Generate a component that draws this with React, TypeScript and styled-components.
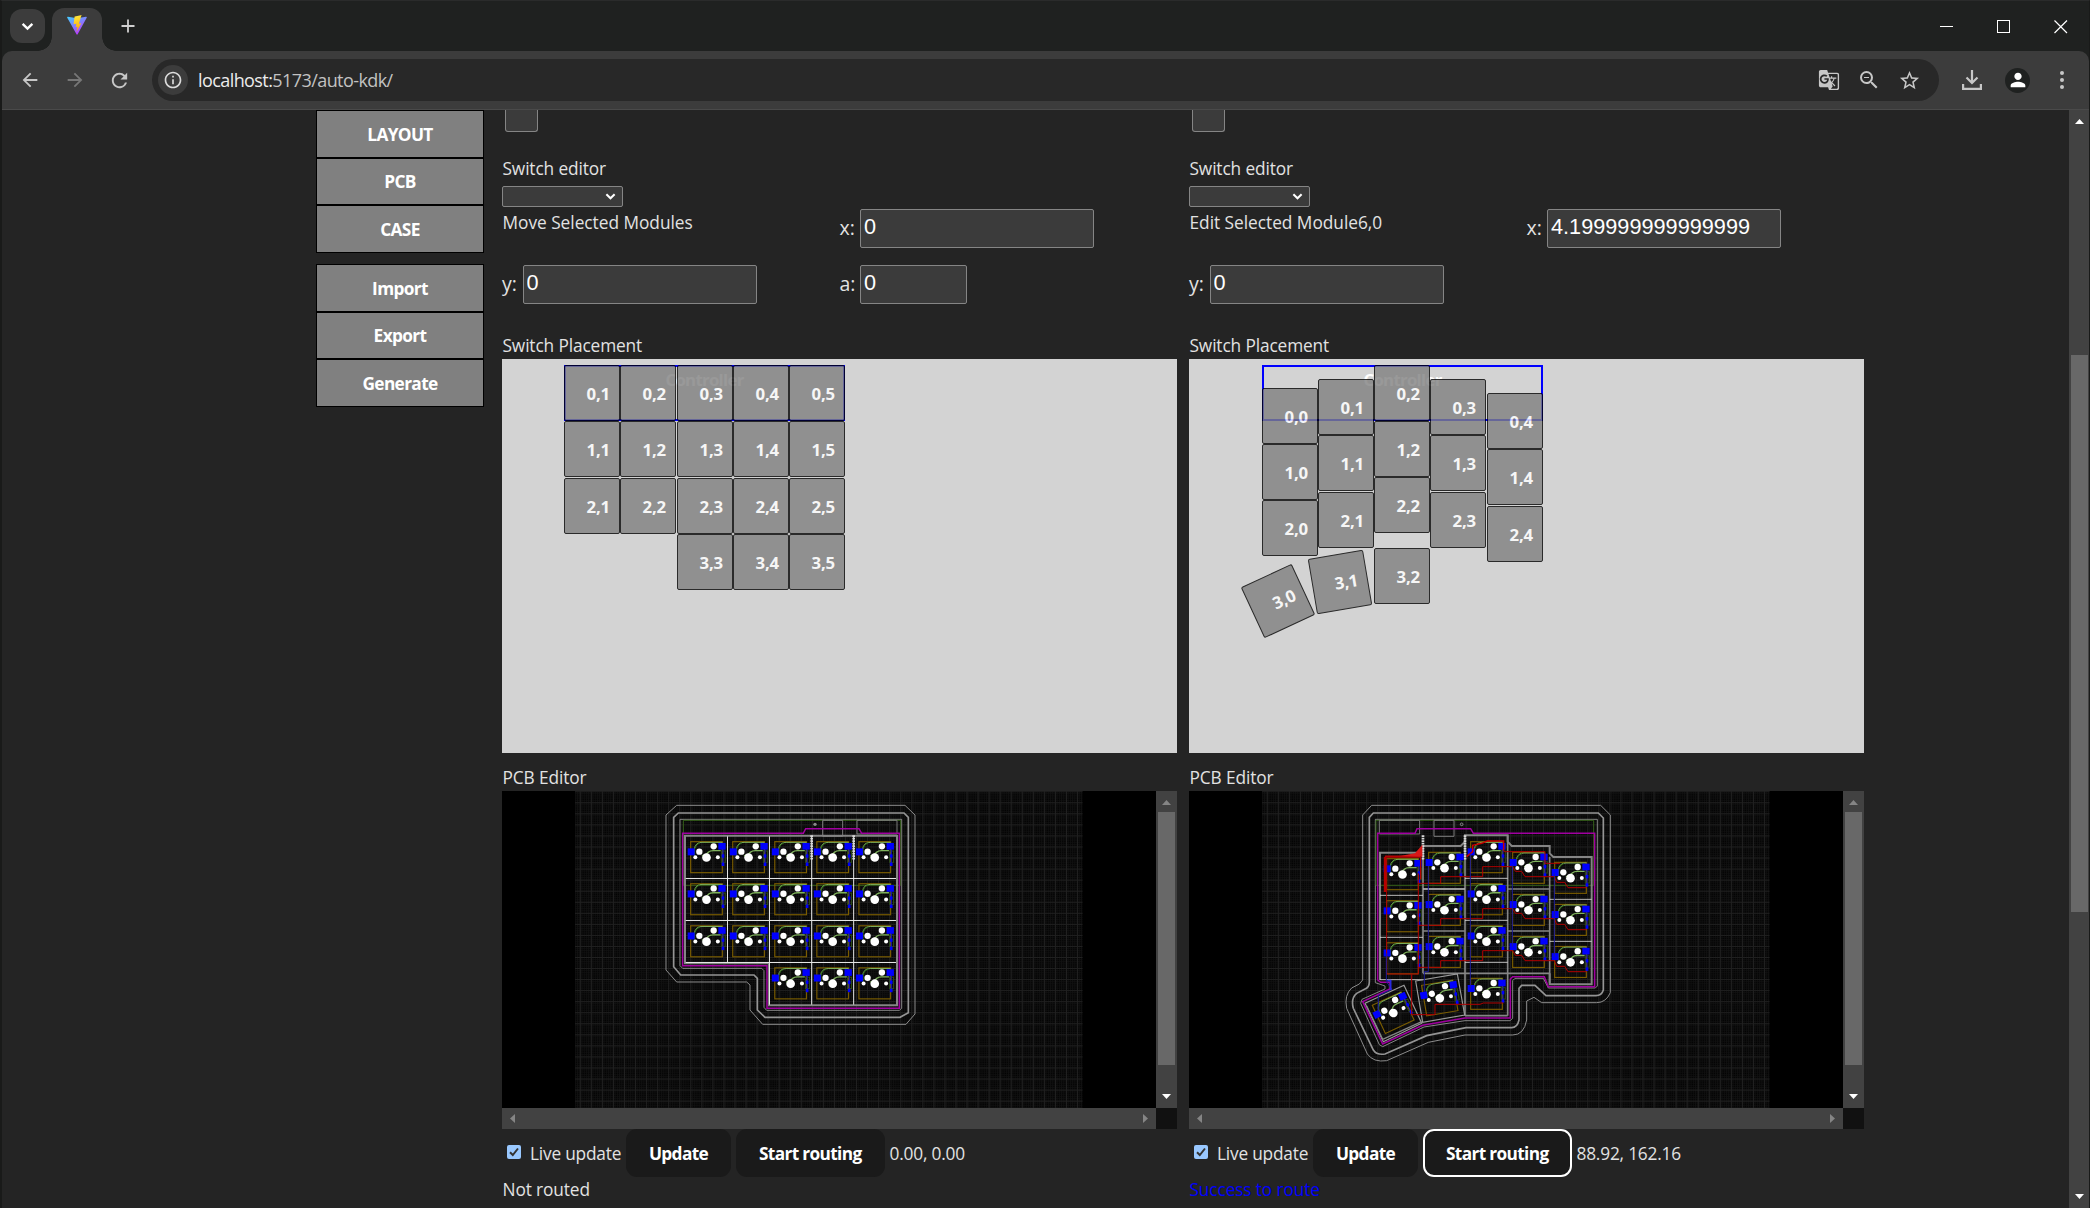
import React from "react";
import styled, { createGlobalStyle } from "styled-components";
import {
  MdArrowBack,
  MdArrowForward,
  MdRefresh,
  MdOutlineInfo,
  MdGTranslate,
  MdZoomOut,
  MdStarBorder,
  MdPerson,
} from "react-icons/md";

const ui = `"Open Sans", "Noto Sans", sans-serif`;

const GlobalStyle = createGlobalStyle`
  * { box-sizing: border-box; }
  html, body { margin: 0; padding: 0; background: #242424; overflow: hidden; }
  button, input, select { margin: 0; }
`;

/* ---------- browser window ---------- */

const Window = styled.div`
  width: 2090px;
  height: 1208px;
  display: flex;
  flex-direction: column;
  overflow: hidden;
  background: #1f2120;
  border-left: 2px solid #191a19;
  border-right: 1px solid #191a19;
  border-top: 1px solid #2a2b2b;
  font-family: ${ui};
  color: #e2e2e2;
`;

const TabStrip = styled.div`
  height: 50px;
  flex: none;
  display: flex;
  align-items: flex-start;
  padding: 7px 0 0 8px;
`;

const TabSearch = styled.div`
  width: 35px;
  height: 34px;
  margin-top: 1px;
  border-radius: 12px;
  background: #3c3c3c;
  display: flex;
  align-items: center;
  justify-content: center;
`;

const Tab = styled.div`
  position: relative;
  width: 50px;
  height: 43px;
  margin-left: 7px;
  border-radius: 12px 12px 0 0;
  background: #3c3c3c;
  display: flex;
  justify-content: center;
  padding-top: 7px;

  &::before,
  &::after {
    content: "";
    position: absolute;
    bottom: 0;
    width: 14px;
    height: 14px;
  }
  &::before {
    left: -14px;
    background: radial-gradient(circle at 0 0, transparent 13.5px, #3c3c3c 14px);
  }
  &::after {
    right: -14px;
    background: radial-gradient(circle at 100% 0, transparent 13.5px, #3c3c3c 14px);
  }
`;

const NewTab = styled.div`
  width: 14px;
  height: 14px;
  margin: 11px 0 0 18.5px;
  display: flex;
`;

const WindowButtons = styled.div`
  margin-left: auto;
  padding: 12px 21px 0 0;
  display: flex;
  gap: 43px;
`;

const Toolbar = styled.div`
  height: 59px;
  flex: none;
  display: flex;
  align-items: center;
  background: #3c3c3c;
  border-bottom: 1px solid #4a4a4a;
  border-radius: 10px 10px 0 0;
  padding-left: 5px;
  color: #c7c7c7;
`;

const NavButton = styled.div<{ $dim?: boolean }>`
  width: 45px;
  display: flex;
  justify-content: center;
  color: ${(p) => (p.$dim ? "#777" : "#c7c7c7")};
`;

const Omnibox = styled.div`
  width: 1787px;
  height: 42px;
  margin-left: 10px;
  border-radius: 21px;
  background: #282828;
  display: flex;
  align-items: center;
  padding: 0 18px 0 6px;
`;

const SiteInfo = styled.div`
  width: 30px;
  height: 30px;
  border-radius: 50%;
  background: #3c3c3c;
  color: #dcdcdc;
  display: flex;
  align-items: center;
  justify-content: center;
`;

const Url = styled.div`
  margin-left: 10px;
  font-size: 18px;
  line-height: 24px;
  letter-spacing: -0.58px;
  color: #c2c2c2;
  white-space: nowrap;
`;

const Host = styled.span`
  color: #ececec;
`;

const OmniActions = styled.div`
  margin-left: auto;
  display: flex;
  align-items: center;
  gap: 17px;
`;

const ToolbarEnd = styled.div`
  display: flex;
  align-items: center;
  margin-left: 23px;
`;

const Avatar = styled.div`
  width: 25px;
  height: 25px;
  margin: 0 30px 0 23px;
  border-radius: 50%;
  background: #1f2120;
  color: #fff;
  display: flex;
  align-items: center;
  justify-content: center;
`;

/* ---------- page ---------- */

const Viewport = styled.div`
  height: 1098px;
  flex: none;
  display: flex;
  background: #242424;
`;

const Page = styled.div`
  flex: 1;
  display: flex;
  align-items: flex-start;
  padding-left: 314px;
  overflow: hidden;
`;

const Menu = styled.nav`
  width: 168px;
  flex: none;
  display: flex;
  flex-direction: column;
  gap: 11px;
`;

const MenuGroup = styled.div`
  display: grid;
  grid-template-rows: 46px 45px 46px;
  row-gap: 2px;
  height: 143px;
  border: 1px solid #000;
  background: #000;
`;

const MenuButton = styled.div`
  display: flex;
  align-items: center;
  justify-content: center;
  background: #808080;
  color: #fff;
  font-size: 17.3px;
  font-weight: 700;
  letter-spacing: -0.65px;
`;

const Columns = styled.div`
  display: flex;
  gap: 12px;
  margin-left: 18px;
`;

const Column = styled.section`
  width: 675px;
  display: flex;
  flex-direction: column;
`;

const StubRow = styled.div`
  height: 46px;
  padding-left: 3px;
`;

const Stub = styled.div`
  width: 33px;
  height: 22px;
  background: #3b3b3b;
  border: 1px solid #858585;
  border-top: 0;
  border-radius: 0 0 3px 3px;
`;

const Label = styled.div<{ $gap: number }>`
  height: 24px;
  line-height: 26px;
  margin-bottom: ${(p) => p.$gap}px;
  font-size: 17.3px;
  letter-spacing: -0.12px;
  padding-left: 0.5px;
  white-space: nowrap;
`;

const Dropdown = styled.div`
  width: 121px;
  height: 21px;
  border: 1px solid #858585;
  border-radius: 2px;
  background: #3b3b3b;
  display: flex;
  align-items: center;
  justify-content: flex-end;
  padding-right: 6px;
`;

const Fields = styled.div`
  display: grid;
  grid-template-columns: 337.5px 337.5px;
  grid-template-rows: 56px 70px;
  align-items: start;
  padding-top: 2px;
  margin-bottom: -2px;
`;

const FieldCaption = styled.div`
  font-size: 17.3px;
  line-height: 24px;
  letter-spacing: -0.02px;
  white-space: nowrap;
  padding: 2px 0 0 0.5px;
`;

const Field = styled.label`
  display: flex;
  align-items: center;
  font-size: 19.5px;
  line-height: 38px;
`;

const FieldName = styled.span`
  width: 20.5px;
`;

const NumberInput = styled.input<{ $width: number }>`
  width: ${(p) => p.$width}px;
  height: 38.5px;
  padding: 0 3px 2px;
  border: 1px solid #858585;
  border-radius: 2px;
  background: #3b3b3b;
  color: #fff;
  font-family: "Liberation Sans", Arial, sans-serif;
  font-size: 21.7px;
  outline: none;
`;

/* ---------- switch placement canvas ---------- */

const Placement = styled.div`
  position: relative;
  height: 394px;
  background: #d3d3d3;
  margin-bottom: 12px;
  overflow: hidden;
  font-size: 16.8px;
  font-weight: 700;
  color: #fff;
`;

const Controller = styled.div<{ $x: number }>`
  position: absolute;
  left: ${(p) => p.$x}px;
  top: 6px;
  width: 281px;
  height: 56px;
  border: 2px solid #0000ff;
  text-align: center;
  line-height: 26px;
  letter-spacing: -0.7px;
`;

const Key = styled.div<{ $x: number; $y: number; $a: number }>`
  position: absolute;
  left: ${(p) => p.$x}px;
  top: ${(p) => p.$y}px;
  width: 56px;
  height: 56px;
  border: 1px solid #000;
  border-radius: 2px;
  background: #808080;
  opacity: 0.8;
  transform: ${(p) => (p.$a ? `rotate(${p.$a}deg)` : "none")};
  padding-left: 21.5px;
  line-height: 55px;
  letter-spacing: -0.2px;
  white-space: nowrap;
`;

/* ---------- pcb editor ---------- */

const PcbFrame = styled.div`
  display: grid;
  grid-template-columns: 654px 21px;
  grid-template-rows: 317px 21px;
  background: #111;
`;

const PcbCanvas = styled.svg`
  display: block;
  width: 654px;
  height: 317px;
  background: #000;
`;

const VBar = styled.div<{ $w: number }>`
  width: ${(p) => p.$w}px;
  flex: none;
  background: #424242;
  display: flex;
  flex-direction: column;
  align-items: center;
`;

const VThumb = styled.div<{ $h: number }>`
  width: 17px;
  height: ${(p) => p.$h}px;
  background: #686868;
`;

const ArrowSlot = styled.div<{ $h: number; $end?: boolean }>`
  height: ${(p) => p.$h}px;
  margin-top: ${(p) => (p.$end ? "auto" : 0)};
  display: flex;
  align-items: center;
  justify-content: center;
  padding-top: ${(p) => (p.$end ? 0 : 2)}px;
  padding-bottom: ${(p) => (p.$end ? 2 : 0)}px;
`;

const HBar = styled.div`
  background: #424242;
  display: flex;
  align-items: center;
  justify-content: space-between;
  padding: 0 8px;
`;

const Controls = styled.div`
  height: 48px;
  display: flex;
  align-items: center;
  font-size: 17.3px;
  letter-spacing: -0.2px;
  padding-left: 5px;
  white-space: nowrap;
`;

const Check = styled.span`
  width: 14px;
  height: 14px;
  border-radius: 2px;
  background: #99c8ff;
  display: flex;
  margin-top: -2px;
`;

const LiveText = styled.span`
  width: 96px;
  margin-left: 9px;
`;

const PillButton = styled.button<{ $w: number; $focus?: boolean }>`
  width: ${(p) => p.$w}px;
  height: 48px;
  padding: 0;
  margin-right: 4.5px;
  border: 0;
  border-radius: 11px;
  background: #1a1a1a;
  color: #fff;
  font-family: ${ui};
  font-size: 17.3px;
  font-weight: 700;
  letter-spacing: -0.65px;
  outline: ${(p) => (p.$focus ? "2px solid #fff" : "none")};
  outline-offset: -2px;
`;

const Status = styled.div<{ $ok?: boolean }>`
  margin-top: 1px;
  font-size: 17.3px;
  line-height: 24px;
  letter-spacing: -0.12px;
  padding-left: 0.5px;
  color: ${(p) => (p.$ok ? "#0000ff" : "#e2e2e2")};
`;

/* ---------- drawings ---------- */

const ViteLogo = () => (
  <svg width="20" height="20" viewBox="0 0 32 32">
    <defs>
      <linearGradient id="va" x1="0" x2="0.6" y1="0" y2="1">
        <stop offset="0" stopColor="#41d1ff" />
        <stop offset="1" stopColor="#bd34fe" />
      </linearGradient>
      <linearGradient id="vb" x1="0.4" x2="0.6" y1="0" y2="1">
        <stop offset="0" stopColor="#ffea3d" />
        <stop offset="1" stopColor="#ffa000" />
      </linearGradient>
    </defs>
    <path d="M31.5 4.2 17 30.9a1 1 0 0 1-1.8 0L.4 4.2a1 1 0 0 1 1.1-1.5L16 5.2l14.4-2.5a1 1 0 0 1 1.1 1.5z" fill="url(#va)" />
    <path d="M24 0 12.5 2.2a.5.5 0 0 0-.4.4l-1.6 12.2 4.5-.7-1 5.3 2.8-.7-1.5 8.5 7.500-14-3.800.6L23 .9z" fill="url(#vb)" />
  </svg>
);

const ChevronDown = ({ w }: { w: number }) => (
  <svg width={w} height={w} viewBox="0 0 12 12">
    <path d="M1.5 3.5 6 8 10.5 3.5" fill="none" stroke="#fff" strokeWidth="2.2" />
  </svg>
);

type Dir = "up" | "down" | "left" | "right";
const arrowPoints: Record<Dir, string> = {
  up: "0,5 4.5,0 9,5",
  down: "0,0 9,0 4.5,5",
  left: "5,0 5,9 0,4.5",
  right: "0,0 5,4.5 0,9",
};
const Arrow = ({ dir, color }: { dir: Dir; color: string }) => {
  const flat = dir === "up" || dir === "down";
  return (
    <svg width={flat ? 9 : 5} height={flat ? 5 : 9}>
      <polygon points={arrowPoints[dir]} fill={color} />
    </svg>
  );
};

/* One key footprint: outline, pads, holes and diode. */
const Footprint = () => (
  <g>
    <rect x="122" y="155" width="95" height="93" fill="none" stroke="#7a5c00" strokeWidth="3.5" />
    <path d="M133 192V178Q136 157 156 157H217" fill="none" stroke="#7fb35c" strokeWidth="3" />
    <path d="M134 200V176Q138 162 150 158" fill="none" stroke="#2f6a1c" strokeWidth="3" />
    <path d="M156 198Q168 196 176 186Q180 182 190 182H212" fill="none" stroke="#7fb35c" strokeWidth="4" />
    <rect x="214" y="183" width="12" height="34" fill="none" stroke="#2c4a1a" strokeWidth="3" />
    <path d="M219 179V226" stroke="#1414c8" strokeWidth="3" />
    <rect x="113" y="175" width="21" height="21" fill="#0000ff" />
    <rect x="205" y="159" width="22" height="20" fill="#0000ff" />
    <rect x="215" y="193" width="8" height="10" fill="#0000ff" />
    <rect x="215" y="218" width="8" height="10" fill="#0000ff" />
    <circle cx="148" cy="185" r="9.5" fill="#fff" />
    <circle cx="191" cy="169" r="9.5" fill="#fff" />
    <circle cx="169.5" cy="202.5" r="13" fill="#fff" />
    <circle cx="136" cy="202" r="6" fill="#fff" />
    <circle cx="203.5" cy="202" r="6" fill="#fff" />
  </g>
);

const Grid = ({ id }: { id: string }) => (
  <>
    <defs>
      <pattern id={`${id}m`} width="2.21" height="2.21" patternUnits="userSpaceOnUse">
        <rect width="2.21" height="2.21" fill="#030303" />
        <path d="M.5 0V2.21M0 .5H2.21" stroke="#111" strokeWidth="0.8" />
      </pattern>
      <pattern id={`${id}g`} x="0.5" y="0.3" width="11.05" height="11.05" patternUnits="userSpaceOnUse">
        <path d="M.5 0V11.05M0 .5H11.05" stroke="#202020" strokeWidth="1" />
      </pattern>
    </defs>
    <rect x="73" width="507.5" height="317" fill={`url(#${id}m)`} />
    <rect x="73" width="507.5" height="317" fill={`url(#${id}g)`} />
  </>
);

const P = 126.2;

const leftCells: [number, number][] = [];
for (let r = 0; r < 4; r++) for (let c = r === 3 ? 2 : 0; c < 5; c++) leftCells.push([c * P, r * P]);

const LeftBoard = () => (
  <PcbCanvas viewBox="0 0 654 317">
    <Grid id="l" />
    <g transform="translate(148 -1) scale(0.33333)" fill="none">
      <path d="M80 46H765L795 75V672L768 703H338L300 660V585L290 576H80L48 540V75Z" stroke="#8c8c8c" strokeWidth="3" />
      <path d="M85 69H762L775 82V668L750 682H345L322 660V565L312 555H92L71 530V82Z" stroke="#949494" strokeWidth="5" />
      <path d="M90 88H755V655L748 661H350L342 652V542L335 535H98L90 527Z" stroke="#9c9c9c" strokeWidth="2.5" />
      <path d="M100 91H752V286H100Z" stroke="#35611a" strokeWidth="3" />
      <path d="M518 91H578V139H518ZM621 91H741V132H621Z" stroke="#7c7c7c" strokeWidth="3" />
      <circle cx="495" cy="103" r="5" fill="#8a8a8a" />
      <path d="M105 137H741V646H357V520H105Z" stroke="#858585" strokeWidth="6" />
      <path d="M98 130H460L467 116H627L635 130H748V655H351V527H98Z" stroke="#a000a0" strokeWidth="4.5" />
      <path
        d="M232.5 139V517M358.5 139V644M485 139V644M611 139V644M107 265.5H738M107 391.5H738M107 517.5H738"
        stroke="#e8e8e8"
        strokeWidth="3"
      />
      <path d="M485 136V210M611 136V210" stroke="#d8d8d8" strokeWidth="8" strokeDasharray="5 2.5" />
      {leftCells.map(([x, y], i) => (
        <g key={i} transform={`translate(${x} ${y})`}>
          <Footprint />
        </g>
      ))}
    </g>
  </PcbCanvas>
);

const rightCells: [number, number][] = [];
[
  [48, 51],
  [174, 32],
  [300, 0],
  [426, 32],
  [552, 62],
].forEach(([x, y]) => {
  for (let r = 0; r < 3; r++) rightCells.push([x, y + r * P]);
});
rightCells.push([300, 410]);

const RightBoard = () => (
  <PcbCanvas viewBox="0 0 654 317">
    <Grid id="r" />
    <g transform="translate(141 -1) scale(0.33333)" fill="none">
      <path
        d="M125 46H812L841 75V608Q828 638 800 638H635L612 622L590 633V690Q582 735 548 735H405L295 757L170 812Q130 818 112 792L50 655Q42 615 65 594L88 582L98 570V75Z"
        stroke="#8c8c8c"
        strokeWidth="3"
      />
      <path
        d="M130 69H805L820 84V600Q815 617 798 617H648L615 586H575L567 595V690Q562 713 545 713H408L290 737L165 792Q140 796 130 780L70 655Q62 625 80 610L105 597Q118 592 118 575V82Z"
        stroke="#949494"
        strokeWidth="5"
      />
      <path
        d="M136 88H802V588L796 594H655L640 565H555L548 572V685L540 692H405L282 711L158 770L148 764L92 640L96 628L165 597V588L136 578Z"
        stroke="#9c9c9c"
        strokeWidth="2.5"
      />
      <path d="M138 91H791V286H138Z" stroke="#35611a" strokeWidth="3" />
      <path d="M148 91H269V132H148ZM312 91H372V139H312Z" stroke="#7c7c7c" strokeWidth="3" />
      <circle cx="395" cy="103" r="4" stroke="#8a8a8a" strokeWidth="3" />
      <path
        d="M150 570V188H279V168H392L405 155V136H533V155L545 168H659V190L670 201H785V583H659V550"
        stroke="#858585"
        strokeWidth="6"
      />
      <path
        d="M279 168V550M405 136V677M533 136V677M659 200V580M279 550H659M405 677H533M279 297H405M279 423H405M533 297H659M533 423H659"
        stroke="#858585"
        strokeWidth="5"
      />
      <path
        d="M150 316H279M150 442H279M279 297H405M405 265H533M405 391H533M659 328H785M659 454H785M405 517H533M150 569H279"
        stroke="#dedede"
        strokeWidth="2.5"
      />
      <path d="M257 573L382 552L404 675L278 697ZM105 640L222 586L275 700L160 755Z" stroke="#9a9a9a" strokeWidth="3.5" />
      <path d="M110 648L158 748L275 695" stroke="#858585" strokeWidth="4" />
      <path
        d="M143 130H255L261 116H422L430 130H794V590H655L643 560H548L541 567V684H405L278 706L158 762L98 635L180 597V577H152L143 570Z"
        stroke="#a000a0"
        strokeWidth="4.5"
      />
      <path d="M279 136V210M405 136V210" stroke="#d8d8d8" strokeWidth="8" strokeDasharray="5 2.5" />

      {rightCells.map(([x, y], i) => (
        <g key={i} transform={`translate(${x} ${y})`}>
          <Footprint />
        </g>
      ))}
      <g transform="translate(329.5 625) rotate(-9.6) translate(-169.5 -202.5)">
        <Footprint />
      </g>
      <g transform="translate(190 669) rotate(-25) translate(-169.5 -202.5)">
        <Footprint />
      </g>

      <g stroke="#b00000" strokeWidth="3">
        {[0, 126, 252].map((d) => (
          <path
            key={d}
            transform={`translate(0 ${d})`}
            d="M265 280H332V260H458V230H548L556 244H575L585 260H673L680 277H704L714 293H770"
          />
        ))}
        <path d="M170 205V552H265V250M245 553V674H315V643H450L460 639H520M521 185H645V220H690" />
      </g>
      <path d="M165 200V306M165 200H270" stroke="#b80000" strokeWidth="7" />
      <path d="M272 200V268" stroke="#b80000" strokeWidth="4" />
      <path d="M210 198L255 190L277 164V200Z" fill="#d81818" />
      <path d="M410 200L428 185V166L455 160L472 153H521V182" stroke="#c80000" strokeWidth="4.5" />
      <path
        d="M295 228V545H283V605M421 190V595M547 225V470M673 250V500M169 490V575L186 598L145 616V665"
        stroke="#1c1c9c"
        strokeWidth="3"
      />
      <path d="M172 572H182V600" stroke="#2a2ae0" strokeWidth="5" />
    </g>
  </PcbCanvas>
);

/* ---------- data ---------- */

type KeyDef = { t: string; x: number; y: number; a?: number };

const PITCH = 56.25;

const leftKeys: KeyDef[] = leftCells.map(([cx, cy]) => {
  const c = Math.round(cx / P);
  const r = Math.round(cy / P);
  return { t: `${r},${c + 1}`, x: Math.round(62 + c * PITCH), y: Math.round(6 + r * PITCH) };
});

const rightKeys: KeyDef[] = [];
[29, 20.5, 6.3, 20.5, 34.5].forEach((top, c) => {
  for (let r = 0; r < 3; r++)
    rightKeys.push({ t: `${r},${c}`, x: Math.floor(73 + c * PITCH), y: Math.floor(top + r * PITCH) });
});
rightKeys.push({ t: "3,0", x: 61, y: 214, a: -25 });
rightKeys.push({ t: "3,1", x: 123.2, y: 195, a: -9.6 });
rightKeys.push({ t: "3,2", x: 185, y: 189 });

type PanelProps = {
  caption: string;
  x: string;
  withAngle?: boolean;
  controllerX: number;
  keys: KeyDef[];
  board: React.ReactNode;
  position: string;
  status: string;
  routed?: boolean;
};

const Panel = (p: PanelProps) => (
  <Column>
    <StubRow>
      <Stub />
    </StubRow>
    <Label $gap={6}>Switch editor</Label>
    <Dropdown>
      <ChevronDown w={11} />
    </Dropdown>
    <Fields>
      <FieldCaption>{p.caption}</FieldCaption>
      <Field>
        <FieldName>x:</FieldName>
        <NumberInput $width={234} defaultValue={p.x} />
      </Field>
      <Field>
        <FieldName>y:</FieldName>
        <NumberInput $width={234} defaultValue="0" />
      </Field>
      {p.withAngle && (
        <Field>
          <FieldName>a:</FieldName>
          <NumberInput $width={107} defaultValue="0" />
        </Field>
      )}
    </Fields>
    <Label $gap={2}>Switch Placement</Label>
    <Placement>
      <Controller $x={p.controllerX}>Controller</Controller>
      {p.keys.map((k) => (
        <Key key={k.t} $x={k.x} $y={k.y} $a={k.a ?? 0}>
          {k.t}
        </Key>
      ))}
    </Placement>
    <Label $gap={2}>PCB Editor</Label>
    <PcbFrame>
      {p.board}
      <VBar $w={21}>
        <ArrowSlot $h={21}>
          <Arrow dir="up" color="#858585" />
        </ArrowSlot>
        <VThumb $h={253} />
        <ArrowSlot $h={21} $end>
          <Arrow dir="down" color="#fff" />
        </ArrowSlot>
      </VBar>
      <HBar>
        <Arrow dir="left" color="#858585" />
        <Arrow dir="right" color="#858585" />
      </HBar>
    </PcbFrame>
    <Controls>
      <Check>
        <svg width="14" height="14" viewBox="0 0 14 14">
          <path d="M3 7.2 5.8 10 11 3.5" fill="none" stroke="#333" strokeWidth="2" />
        </svg>
      </Check>
      <LiveText>Live update</LiveText>
      <PillButton $w={105}>Update</PillButton>
      <PillButton $w={149.5} $focus={p.routed}>
        Start routing
      </PillButton>
      <span>{p.position}</span>
    </Controls>
    <Status $ok={p.routed}>{p.status}</Status>
  </Column>
);

const menuGroups = [
  ["LAYOUT", "PCB", "CASE"],
  ["Import", "Export", "Generate"],
];

export default function App() {
  return (
    <Window>
      <GlobalStyle />
      <TabStrip>
        <TabSearch>
          <ChevronDown w={13} />
        </TabSearch>
        <Tab>
          <ViteLogo />
        </Tab>
        <NewTab>
          <svg width="14" height="14">
            <path d="M7 .5V13.5M.5 7H13.5" stroke="#d0d0d0" strokeWidth="1.8" />
          </svg>
        </NewTab>
        <WindowButtons>
          <svg width="14" height="14">
            <path d="M0 6.5H13" stroke="#fff" />
          </svg>
          <svg width="14" height="14">
            <rect x=".5" y=".5" width="12" height="12" fill="none" stroke="#fff" />
          </svg>
          <svg width="14" height="14">
            <path d="M.5 .5 13 13M13 .5 .5 13" stroke="#fff" strokeWidth="1.2" />
          </svg>
        </WindowButtons>
      </TabStrip>
      <Toolbar>
        <NavButton>
          <MdArrowBack size={22} />
        </NavButton>
        <NavButton $dim>
          <MdArrowForward size={22} />
        </NavButton>
        <NavButton>
          <MdRefresh size={23} />
        </NavButton>
        <Omnibox>
          <SiteInfo>
            <MdOutlineInfo size={20} />
          </SiteInfo>
          <Url>
            <Host>localhost:</Host>5173/auto-kdk/
          </Url>
          <OmniActions>
            <MdGTranslate size={22} />
            <MdZoomOut size={24} />
            <MdStarBorder size={23} />
          </OmniActions>
        </Omnibox>
        <ToolbarEnd>
          <svg width="20" height="20" viewBox="0 0 20 20" fill="none" stroke="#c7c7c7" strokeWidth="2.2">
            <path d="M10 0V12M4.5 7.5 10 13 15.5 7.5M1.100 14V18.900H18.900V14" />
          </svg>
          <Avatar>
            <MdPerson size={22} />
          </Avatar>
          <svg width="4" height="18" fill="#c7c7c7">
            <circle cx="2" cy="2" r="2" />
            <circle cx="2" cy="9" r="2" />
            <circle cx="2" cy="16" r="2" />
          </svg>
        </ToolbarEnd>
      </Toolbar>
      <Viewport>
        <Page>
          <Menu>
            {menuGroups.map((g) => (
              <MenuGroup key={g[0]}>
                {g.map((t) => (
                  <MenuButton key={t}>{t}</MenuButton>
                ))}
              </MenuGroup>
            ))}
          </Menu>
          <Columns>
            <Panel
              caption="Move Selected Modules"
              x="0"
              withAngle
              controllerX={62}
              keys={leftKeys}
              board={<LeftBoard />}
              position="0.00, 0.00"
              status="Not routed"
            />
            <Panel
              caption="Edit Selected Module6,0"
              x="4.199999999999999"
              controllerX={73}
              keys={rightKeys}
              board={<RightBoard />}
              position="88.92, 162.16"
              status="Success to route"
              routed
            />
          </Columns>
        </Page>
        <VBar $w={20}>
          <ArrowSlot $h={21}>
            <Arrow dir="up" color="#fff" />
          </ArrowSlot>
          <ArrowSlot $h={224} />
          <VThumb $h={557} />
          <ArrowSlot $h={22} $end>
            <Arrow dir="down" color="#fff" />
          </ArrowSlot>
        </VBar>
      </Viewport>
    </Window>
  );
}
